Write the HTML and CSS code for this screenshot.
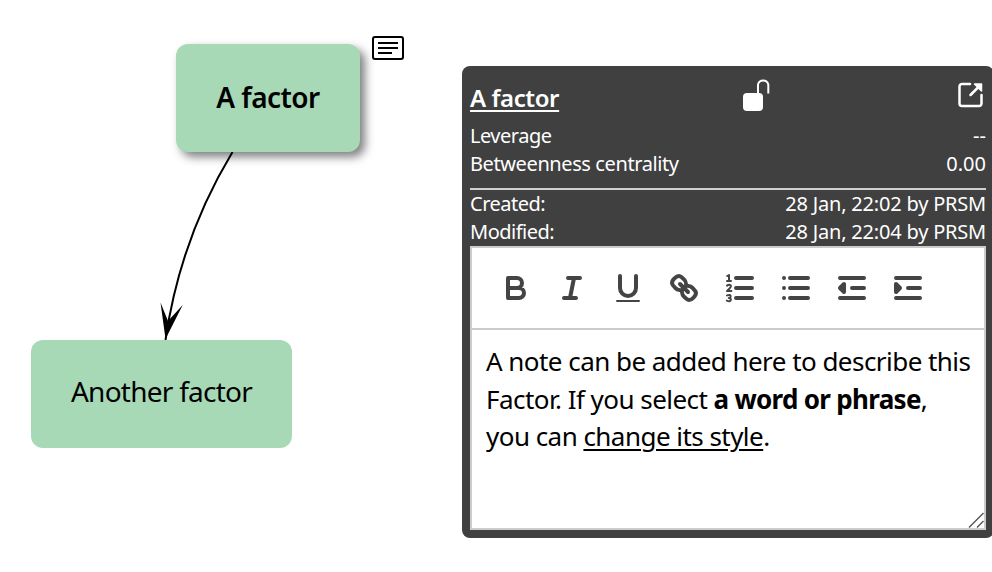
FILE: index.html
```html
<!DOCTYPE html>
<html lang="en">
<head>
<meta charset="utf-8">
<title>Factor map</title>
<link rel="stylesheet" href="styles.css">
</head>
<body>
<main class="map">
  <svg class="edge" width="440" height="572" viewBox="0 0 440 572">
    <path d="M232.500 152 Q180 239 165.500 340" fill="none" stroke="#000" stroke-width="2"/>
    <path d="M165.500 339 L160.500 302.500 L168 321 L182.700 305 Z"/>
  </svg>
  <div class="node node-selected"><span>A factor</span></div>
  <div class="node node-other"><span>Another factor</span></div>
  <svg class="note-icon" width="32" height="24" viewBox="0 0 32 24" fill="none" stroke="#000" stroke-width="2">
    <rect x="1" y="1" width="30" height="22" rx="2"/>
    <path d="M6 7H26M6 12H26M6 17H20"/>
  </svg>
</main>
<aside class="panel">
  <header class="head">
    <h1><span>A factor</span></h1>
    <svg class="lock" width="28" height="34" viewBox="0 0 28 34">
      <rect x="1" y="15" width="20" height="18" rx="4" fill="#fff"/>
      <path d="M16 15V6.500a5.300 5.300 0 0 1 10.300 0V15.500" fill="none" stroke="#fff" stroke-width="2"/>
    </svg>
    <svg class="open" width="26" height="26" viewBox="0 0 26 26" fill="none" stroke="#fff" stroke-width="2.500" stroke-linecap="round" stroke-linejoin="round">
      <path d="M12 2H4a2.500 2.500 0 0 0-2.500 2.500V21.500A2.500 2.500 0 0 0 4 24H21a2.500 2.500 0 0 0 2.500-2.500V13"/>
      <path d="M12.500 13L22 3.500"/>
      <path d="M16.500 2H23.500V9Z" fill="#fff" stroke-width="1.500"/>
    </svg>
  </header>
  <div class="row"><span class="label">Leverage</span><span>--</span></div>
  <div class="row"><span class="label long">Betweenness centrality</span><span>0.00</span></div>
  <div class="rule"></div>
  <div class="row"><span class="label">Created:</span><span class="date">28 Jan, 22:02 by PRSM</span></div>
  <div class="row"><span class="label">Modified:</span><span class="date">28 Jan, 22:04 by PRSM</span></div>
  <section class="editor">
    <div class="toolbar">
      <svg viewBox="0 0 18 18"><path d="M5 4H9.500A2.500 2.500 0 0 1 12 6.500 2.500 2.500 0 0 1 9.500 9H5ZM5 9H10.500A2.500 2.500 0 0 1 13 11.500 2.500 2.500 0 0 1 10.500 14H5Z"/></svg>
      <svg viewBox="0 0 18 18"><path d="M7 4H13M5 14H11M8 14L10 4"/></svg>
      <svg viewBox="0 0 18 18"><path d="M5 3V9a4.012 4.012 0 0 0 4 4 4.012 4.012 0 0 0 4-4V3"/><rect class="fill" x="3" y="15" width="12" height="1" rx=".5"/></svg>
      <svg viewBox="0 0 18 18"><path d="M7 7L11 11"/><path d="M8.900 4.577a3.476 3.476 0 0 1 .36 4.679A3.476 3.476 0 0 1 4.577 8.900C3.185 7.500 2.035 6.400 4.217 4.217S7.500 3.185 8.900 4.577ZM13.423 9.100a3.476 3.476 0 0 0-4.679-.36 3.476 3.476 0 0 0 .36 4.679c1.392 1.392 2.500 2.542 4.679.36S14.815 10.500 13.423 9.100Z"/></svg>
      <svg viewBox="0 0 18 18"><path d="M7 4H15M7 9H15M7 14H15"/><path class="thin" d="M2.500 5.500H4.500M3.500 5.500V2.500L2.600 3M2.500 7.800Q3.500 7 4.300 7.600T2.500 10.500H4.700M2.500 12.700Q4.500 12 4.300 13.200T3.400 14Q4.600 14 4.400 15T2.400 15.300"/></svg>
      <svg viewBox="0 0 18 18"><path d="M6 4H15M6 9H15M6 14H15M3 4H3M3 9H3M3 14H3"/></svg>
      <svg viewBox="0 0 18 18"><path d="M3 14H15M3 4H15M9 9H15"/><path d="M5 7V11L3 9Z"/></svg>
      <svg viewBox="0 0 18 18"><path d="M3 14H15M3 4H15M9 9H15"/><path d="M3 7V11L5 9Z"/></svg>
    </div>
    <div class="note">
      <p>A note can be added here to describe this</p>
      <p>Factor. If you select <b>a word or phrase</b>,</p>
      <p>you can <u>change its style</u>.</p>
      <svg class="grip" width="16" height="16" viewBox="0 0 16 16" stroke="#555" stroke-width="1.400"><path d="M1 15.500L15.500 1M9 15.500L15.500 9"/></svg>
    </div>
  </section>
</aside>
</body>
</html>
```
FILE: styles.css
```css
* { box-sizing: border-box; }
body {
  margin: 0;
  width: 992px;
  height: 572px;
  overflow: hidden;
  display: flex;
  background: #fff;
  color: #000;
  font-family: "Noto Sans", sans-serif;
}
.map { position: relative; width: 462px; flex: none; }
.edge { position: absolute; left: 0; top: 0; }
.node {
  position: absolute;
  display: flex;
  align-items: center;
  justify-content: center;
  height: 108px;
  border-radius: 12px;
  background: #a7d9b7;
  font-size: 28px;
  white-space: nowrap;
}
.node-selected {
  left: 176px;
  top: 44px;
  width: 184px;
  padding-bottom: 2px;
  font-weight: 600;
  letter-spacing: -.55px;
  box-shadow: 5px 5px 10px rgba(0, 0, 0, .5);
}
.node-other {
  left: 31px;
  top: 340px;
  width: 261px;
  padding-bottom: 6px;
  letter-spacing: -.75px;
}
.note-icon { position: absolute; left: 372px; top: 36px; }
.panel {
  flex: none;
  width: 532px;
  height: 472px;
  margin-top: 66px;
  padding: 8px;
  border-radius: 8px;
  background: #404040;
  color: #fff;
  display: flex;
  flex-direction: column;
}
.head { display: flex; height: 48px; flex: none; }
h1 {
  margin: 0;
  width: 272px;
  font-size: 24px;
  line-height: 48px;
  font-weight: 600;
  letter-spacing: -.4px;
  text-decoration: underline;
  text-decoration-thickness: 2px;
  text-underline-offset: 3px;
}
.lock { margin-top: 4px; }
.open { margin: 8px 2px 0 auto; }
.row {
  display: flex;
  justify-content: space-between;
  height: 28px;
  flex: none;
  font-size: 20px;
  line-height: 28px;
  white-space: nowrap;
}
.label { letter-spacing: -.5px; }
.long { letter-spacing: -.4px; }
.date { letter-spacing: -.2px; }
.rule { height: 2px; margin: 10px 0 0; background: #d0d0d0; flex: none; }
.editor {
  flex: 1;
  display: flex;
  flex-direction: column;
  border: 2px solid #ccc;
  background: #fff;
  color: #000;
}
.toolbar {
  display: flex;
  gap: 20px;
  height: 82px;
  padding: 22px 26px;
  border-bottom: 2px solid #ccc;
}
.toolbar svg {
  width: 36px;
  height: 36px;
  fill: none;
  stroke: #444;
  stroke-width: 2;
  stroke-linecap: round;
  stroke-linejoin: round;
}
.toolbar .fill { fill: #444; stroke: none; }
.toolbar .thin { stroke-width: 1; }
.toolbar svg:nth-child(n+7) path:last-child { fill: #444; }
.note {
  position: relative;
  flex: 1;
  padding: 13px 14px;
  font-size: 26px;
  line-height: 37.500px;
  letter-spacing: -.54px;
  white-space: nowrap;
}
.note p { margin: 0; }
.note b { letter-spacing: -.7px; }
.note u { text-decoration-thickness: 2px; text-underline-offset: 3px; }
.grip { position: absolute; right: 0; bottom: 0; }
```
